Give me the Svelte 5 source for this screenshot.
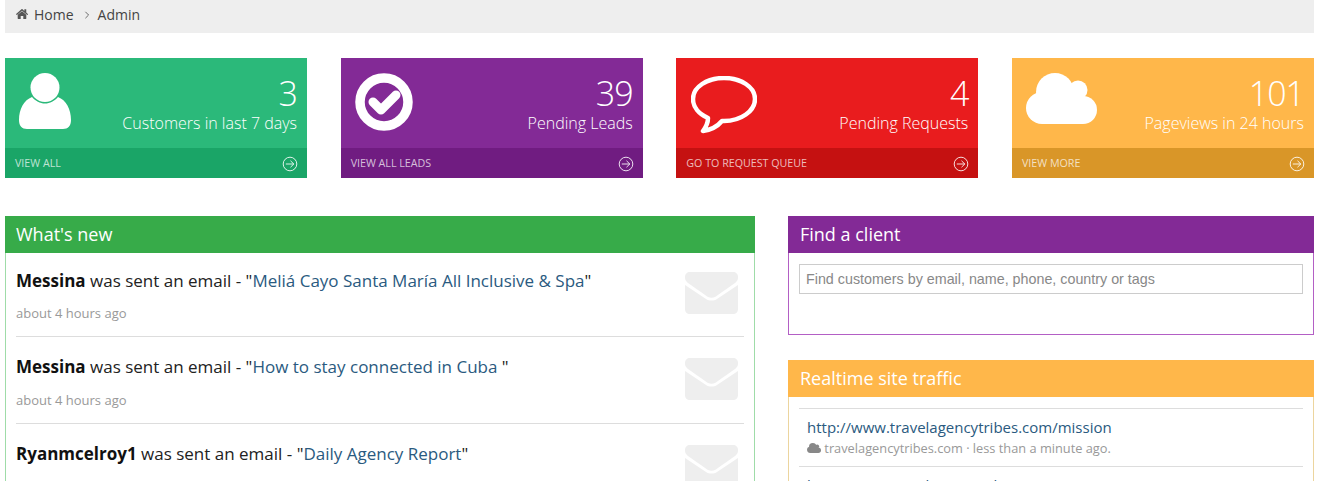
<script>
	const stats = [
		{ color: 'green', icon: 'user', value: '3', label: 'Customers in last 7 days', link: 'VIEW ALL' },
		{ color: 'purple', icon: 'check', value: '39', label: 'Pending Leads', link: 'VIEW ALL LEADS' },
		{ color: 'red', icon: 'bubble', value: '4', label: 'Pending Requests', link: 'GO TO REQUEST QUEUE' },
		{ color: 'amber', icon: 'cloud', value: '101', label: 'Pageviews in 24 hours', link: 'VIEW MORE' }
	];

	const news = [
		{ name: 'Messina', title: 'Meliá Cayo Santa María All Inclusive & Spa', time: 'about 4 hours ago' },
		{ name: 'Messina', title: 'How to stay connected in Cuba ', time: 'about 4 hours ago' },
		{ name: 'Ryanmcelroy1', title: 'Daily Agency Report', time: 'about 4 hours ago' }
	];

	const traffic = [
		{ url: 'http://www.travelagencytribes.com/mission', site: 'travelagencytribes.com', time: 'less than a minute ago.' },
		{ url: 'http://www.travelagencytribes.com/contact', site: 'travelagencytribes.com', time: 'less than a minute ago.' }
	];
</script>

{#snippet cloud()}
	<svg class="cloud" viewBox="0 0 71 51" aria-hidden="true">
		<circle cx="29" cy="19" r="19" />
		<circle cx="52" cy="17" r="9.500" />
		<circle cx="16" cy="35" r="16" />
		<circle cx="57" cy="37" r="14" />
		<rect x="16" y="20" width="41" height="31" />
	</svg>
{/snippet}

<div class="page">
	<nav class="crumbs">
		<svg class="home" viewBox="0 0 24 20" aria-hidden="true">
			<path d="M12 4.600 3.400 11.700V19c0 .5.4.8.8.8h5.200v-5.600h5.200v5.600h5.200c.5 0 .8-.3.8-.8v-7.300z" />
			<path d="M23.800 9.800 20.500 7V1.200c0-.3-.2-.5-.4-.5h-2.900c-.3 0-.5.2-.5.5v2.600L13.100.5a1.800 1.800 0 0 0-2.200 0L.2 9.800c-.2.200-.3.500-.1.700l1 1.200c.1.100.2.200.4.200s.3 0 .4-.1L12 3.300l10.500 8.500c.1.100.2.100.4.100s.3-.1.400-.2l1-1.200c.2-.2.100-.5-.1-.7z" />
		</svg>
		<span>Home</span>
		<svg class="chevron" viewBox="0 0 6 10" aria-hidden="true"><path d="M1 1l4 4-4 4" /></svg>
		<span>Admin</span>
	</nav>

	<section class="stats">
		{#each stats as s}
			<article class="stat {s.color}">
				<div class="stat-main">
					<div class="stat-icon">
						{#if s.icon === 'user'}
							<svg class="i-user" viewBox="0 0 52 56" aria-hidden="true">
								<circle cx="26" cy="14.500" r="14.500" fill="#fff" />
								<path d="M13 24C16.500 28 21 30.500 26 30.500S35.500 28 39 24C47 27 52 36 52 47 52 53 49 56 44 56H8C3 56 0 53 0 47 0 36 5 27 13 24z" fill="#fff" />
							</svg>
						{:else if s.icon === 'check'}
							<svg class="i-check" viewBox="0 0 58 58" aria-hidden="true">
								<circle cx="29" cy="29" r="24" fill="none" stroke="#fff" stroke-width="9.500" />
								<path d="M18 29l8 8 15-15" fill="none" stroke="#fff" stroke-width="9" stroke-linecap="round" stroke-linejoin="round" />
							</svg>
						{:else if s.icon === 'bubble'}
							<svg class="i-bubble" viewBox="0 0 66 58" aria-hidden="true">
								<path d="M33 2C16 2 2 11 2 23c0 8 6 15 15 19 0 4-2 9-5 13 7-1 14-4 19-10h2c17 0 31-10 31-22S50 2 33 2z" fill="none" stroke="#fff" stroke-width="4.500" stroke-linejoin="round" />
							</svg>
						{:else}
							{@render cloud()}
						{/if}
					</div>
					<div class="stat-text">
						<div class="value">{s.value}</div>
						<div class="label">{s.label}</div>
					</div>
				</div>
				<div class="stat-foot">
					<span>{s.link}</span>
					<svg viewBox="0 0 16 16" aria-hidden="true">
						<circle cx="8" cy="8" r="6.800" />
						<path d="M3.800 8h8M8.500 4.800 11.800 8 8.500 11.200" />
					</svg>
				</div>
			</article>
		{/each}
	</section>

	<div class="columns">
		<section class="panel p-green">
			<h2>What's new</h2>
			<div class="news">
				{#each news as n}
					<div class="news-row">
						<div>
							<p class="line"><b>{n.name}</b> was sent an email - "<a href="#news">{n.title}</a>"</p>
							<p class="time">{n.time}</p>
						</div>
						<svg class="mail" viewBox="0 0 53 42" aria-hidden="true">
							<path d="M5 0h43c3 0 5 2 5 5v1c0 2-1 3-3 5L30 25c-2 1-5 1-7 0L3 11C1 9 0 8 0 6V5c0-3 2-5 5-5z" />
							<path d="M0 13 21 27c3 2 8 2 11 0L53 13v24c0 3-2 5-5 5H5c-3 0-5-2-5-5z" />
						</svg>
					</div>
				{/each}
			</div>
		</section>

		<div class="side">
			<section class="panel p-purple">
				<h2>Find a client</h2>
				<div class="find">
					<input type="text" placeholder="Find customers by email, name, phone, country or tags" />
				</div>
			</section>

			<section class="panel p-amber">
				<h2>Realtime site traffic</h2>
				<div class="traffic">
					{#each traffic as t}
						<div class="traffic-row">
							<a href="#traffic">{t.url}</a>
							<p>
								{@render cloud()}
								{t.site} · {t.time}
							</p>
						</div>
					{/each}
				</div>
			</section>
		</div>
	</div>
</div>

<style>
	:global(html),
	:global(body) {
		height: 481px;
		overflow: hidden;
	}

	:global(body) {
		background: #fff;
		font-family: 'Open Sans', 'Liberation Sans', sans-serif;
	}

	.page {
		padding: 0 20px 0 5px;
		color: #222;
	}

	.crumbs {
		display: flex;
		align-items: center;
		height: 33px;
		padding: 0 0 5px 11px;
		box-sizing: border-box;
		background: #eee;
		font-size: 14px;
		color: #444;
	}

	.home {
		width: 12px;
		height: 10px;
		margin-right: 6px;
		fill: #555;
	}

	.chevron {
		width: 6px;
		height: 8px;
		margin: 1px 8px 0 10px;
		fill: none;
		stroke: #666;
		stroke-width: 1.2;
	}

	.stats {
		display: grid;
		grid-template-columns: repeat(4, 302px);
		justify-content: space-between;
		margin-top: 25px;
	}

	.stat {
		height: 120px;
		display: flex;
		flex-direction: column;
		color: #fff;
	}

	.stat-main {
		flex: 1;
		display: flex;
		justify-content: space-between;
		padding: 0 10px 0 14px;
		background: var(--bg);
	}

	.stat-icon {
		padding-top: 15px;
	}

	.stat-icon svg {
		display: block;
	}

	.i-user {
		width: 52px;
		height: 56px;
	}

	.i-check {
		width: 58px;
		height: 58px;
	}

	.i-bubble {
		width: 66px;
		height: 58px;
		margin: 3px 0 0 1px;
	}

	.stat-icon :global(.cloud) {
		width: 71px;
		height: 51px;
		fill: #fff;
	}

	.stat-text {
		text-align: right;
		font-weight: 300;
		padding-top: 13px;
	}

	.value {
		font-size: 34px;
		line-height: 44px;
		letter-spacing: -1px;
	}

	.label {
		font-size: 16px;
		line-height: 22px;
		margin-top: -3px;
	}

	.stat-foot {
		height: 30px;
		display: flex;
		align-items: center;
		justify-content: space-between;
		padding: 0 9px 0 10px;
		background: var(--foot);
		font-size: 10.700px;
		color: rgba(255, 255, 255, 0.72);
	}

	.stat-foot svg {
		width: 16px;
		height: 16px;
		margin-top: 1px;
		fill: none;
		stroke: rgba(255, 255, 255, 0.85);
		stroke-width: 1;
	}

	.green {
		--bg: #2bb97a;
		--foot: #1aa567;
	}

	.purple {
		--bg: #832a96;
		--foot: #701c81;
	}

	.red {
		--bg: #e91c1e;
		--foot: #c51111;
	}

	.amber {
		--bg: #ffb74a;
		--foot: #d99628;
	}

	.columns {
		display: flex;
		justify-content: space-between;
		align-items: flex-start;
		margin-top: 38px;
	}

	.panel {
		box-sizing: border-box;
		border: 1px solid var(--line);
		border-top: 0;
	}

	.panel h2 {
		height: 37px;
		margin: 0 -1px;
		padding: 0 11px;
		background: var(--head);
		color: #fff;
		font-size: 18px;
		font-weight: 400;
		line-height: 37px;
	}

	.p-green {
		--head: #37ab49;
		--line: #9fdca8;
		width: 750px;
	}

	.p-purple {
		--head: #832a96;
		--line: #b35fc5;
	}

	.p-amber {
		--head: #ffb74a;
		--line: #ecd59e;
		margin-top: 25px;
	}

	.side {
		width: 526px;
	}

	.side h2 {
		padding-left: 12px;
	}

	.news {
		padding: 0 10px;
	}

	.news-row {
		display: flex;
		justify-content: space-between;
		height: 87px;
		padding-top: 19px;
		box-sizing: border-box;
		border-bottom: 1px solid #ddd;
	}

	.news-row:first-child {
		height: 84px;
		padding-top: 17px;
	}

	.line {
		margin: 0;
		font-size: 17px;
		line-height: 22px;
		color: #222;
	}

	.line b {
		color: #111;
	}

	.line a,
	.traffic a {
		color: #2a5a80;
		text-decoration: none;
	}

	.time {
		margin: 13px 0 0;
		font-size: 13px;
		line-height: 18px;
		color: #999;
	}

	.news-row:first-child .time {
		margin-top: 12px;
	}

	.mail {
		width: 53px;
		height: 42px;
		margin: 2px 6px 0 0;
		fill: #eee;
	}

	.find {
		height: 81px;
		padding: 11px 10px 0;
		box-sizing: border-box;
	}

	.find input {
		display: block;
		width: 100%;
		height: 30px;
		box-sizing: border-box;
		padding: 0 6px;
		border: 1px solid #ccc;
		background: #fff;
		font-family: 'Liberation Sans', Arial, sans-serif;
		font-size: 14.300px;
	}

	.find input::placeholder {
		color: #888;
		opacity: 1;
	}

	.traffic {
		padding: 11px 10px 0;
	}

	.traffic-row {
		height: 58px;
		padding: 7px 8px 0;
		box-sizing: border-box;
		border-top: 1px solid #ddd;
	}

	.traffic a {
		display: block;
		font-size: 15px;
		line-height: 22px;
	}

	.traffic p {
		margin: 1px 0 0;
		font-size: 12.800px;
		line-height: 19px;
		color: #999;
	}

	.traffic p :global(.cloud) {
		width: 14px;
		height: 10px;
		fill: #888;
	}
</style>
